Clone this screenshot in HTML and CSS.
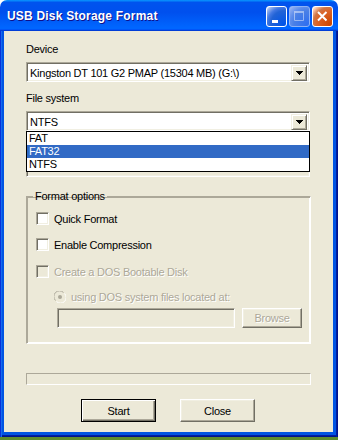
FILE: index.html
```html
<!DOCTYPE html>
<html lang="en">
<head>
  <meta charset="UTF-8">
  <title>USB Disk Storage Format</title>
  <link rel="stylesheet" href="styles.css">
</head>
<body>

  <div class="window">
    <div class="titlebar">
      <span class="title">USB Disk Storage Format</span>
      <div class="caption-btns">
        <span class="cap-btn minimize">
          <svg width="19" height="19"><rect x="5" y="13" width="6" height="3" fill="#fff"/></svg>
        </span>
        <span class="cap-btn maximize">
          <svg width="19" height="19"><path d="M4.5 4.5h9v9h-9z" fill="none" stroke="#fff"/><rect x="4" y="4" width="10" height="2" fill="#fff"/></svg>
        </span>
        <span class="cap-btn close">
          <svg width="19" height="19"><path d="M5 5L13.5 13.5M13.5 5L5 13.5" stroke="#fff" stroke-width="2"/></svg>
        </span>
      </div>
    </div>

    <div class="frame">
      <div class="client">

        <div class="label first">Device</div>
        <div class="combo">
          <span class="combo-text">Kingston DT 101 G2 PMAP (15304 MB) (G:\)</span>
          <span class="combo-btn">
            <svg width="7" height="4" shape-rendering="crispEdges"><rect x="0" y="0" width="7" height="1"/><rect x="1" y="1" width="5" height="1"/><rect x="2" y="2" width="3" height="1"/><rect x="3" y="3" width="1" height="1"/></svg>
          </span>
        </div>

        <div class="label">File system</div>
        <div class="combo-wrap">
          <div class="combo">
            <span class="combo-text">NTFS</span>
            <span class="combo-btn">
              <svg width="7" height="4" shape-rendering="crispEdges"><rect x="0" y="0" width="7" height="1"/><rect x="1" y="1" width="5" height="1"/><rect x="2" y="2" width="3" height="1"/><rect x="3" y="3" width="1" height="1"/></svg>
            </span>
          </div>
          <ul class="droplist">
            <li>FAT</li>
            <li class="selected">FAT32</li>
            <li>NTFS</li>
          </ul>
        </div>

        <!-- volume label row, covered by the open list -->
        <div class="label-space"></div>
        <div class="field"></div>

        <fieldset class="group">
          <legend>Format options</legend>
          <div class="check-row first-row"><span class="checkbox"></span>Quick Format</div>
          <div class="check-row"><span class="checkbox"></span>Enable Compression</div>
          <div class="check-row disabled"><span class="checkbox off"></span>Create a DOS Bootable Disk</div>
          <div class="radio-row disabled">
            <svg width="12" height="12">
              <circle cx="6" cy="6" r="5.5" fill="#ece9d8"/>
              <path d="M1.5 9.5A5.5 5.5 0 0 1 9.5 1.5" fill="none" stroke="#aca899"/>
              <path d="M2.5 10.5A5.5 5.5 0 0 0 10.5 2.5" fill="none" stroke="#fff"/>
              <circle cx="6" cy="6" r="2" fill="#aca899"/>
            </svg>
            <span>using DOS system files located at:</span>
          </div>
          <div class="path-row">
            <div class="path-field"></div>
            <button class="btn browse" disabled>Browse</button>
          </div>
        </fieldset>

        <div class="progress"></div>

        <div class="actions">
          <button class="btn default">Start</button>
          <button class="btn">Close</button>
        </div>

      </div>
    </div>
  </div>
  <div class="desktop"></div>

</body>
</html>
```

FILE: styles.css
```css
body{
  margin: 0;
  background: #fff;
  font-family: "Liberation Sans", Arial, sans-serif;
  font-size: 11px;
  letter-spacing: -0.25px;
  color: #000;
}

.window{
  width: 338px;
}

.titlebar{
  height: 31px;
  box-sizing: border-box;
  padding: 0 5px 0 7px;
  display: flex;
  align-items: center;
  justify-content: space-between;
  border-radius: 7px 7px 0 0;
  background: linear-gradient(180deg, #0997ff, #0053ee 8%, #0050ee 40%, #06f 88%, #06f 93%, #005bff 95%, #003dd7 96%, #003dd7);
}

.title{
  color: #fff;
  font-weight: bold;
  font-size: 12px;
  letter-spacing: 0.2px;
  text-shadow: 1px 1px #0f1089;
  margin-top: 1px;
}

.caption-btns{
  display: flex;
  gap: 2px;
  margin-top: 2px;
}

.cap-btn{
  width: 21px;
  height: 21px;
  box-sizing: border-box;
  border: 1px solid #fff;
  border-radius: 3px;
  display: flex;
}

.minimize{
  background: radial-gradient(circle at 90% 90%, #0054e9 0%, #2263d5 55%, #4479e4 70%, #a3bbec 90%, #fff 100%);
}

.maximize{
  border-color: #8db2f5;
  background: radial-gradient(circle at 90% 90%, #2f6ff0 0%, #4a80e6 55%, #5e8deb 70%, #8aaaf0 90%, #a9c0f3 100%);
}

.maximize svg{
  opacity: 0.45;
}

.close{
  background: radial-gradient(circle at 90% 90%, #cc4600 0%, #dc6527 55%, #cd7546 70%, #ffccb2 90%, #fff 100%);
}

.frame{
  padding: 0 5px 5px 4px;
  background: #0054e3;
  box-shadow: inset 1px 0 #0831d9, inset 2px 0 #166aee, inset -1px 0 #00138c, inset -2px 0 #001ea0, inset 0 -1px #00138c, inset 0 -2px #001ea0;
}

.client{
  height: 401px;
  box-sizing: border-box;
  padding: 12px 0 0 22px;
  background: #ece9d8;
}

.label{
  line-height: 13px;
  margin-top: 10px;
}

.label.first{
  margin-top: 0;
}

.label-space{
  height: 13px;
  margin-top: 7px;
}

/* sunken edit/combo look */
.combo, .field, .path-field{
  box-sizing: border-box;
  border: 1px solid;
  border-color: #aca899 #fff #fff #aca899;
  box-shadow: inset 1px 1px #716f64, inset -1px -1px #f1efe2;
}

.combo{
  margin-top: 6px;
  width: 284px;
  height: 20px;
  padding: 2px;
  background: #fff;
  display: flex;
  justify-content: space-between;
}

.combo-text{
  padding-left: 1px;
  line-height: 16px;
}

.combo-btn{
  width: 16px;
  height: 16px;
  box-sizing: border-box;
  border: 1px solid;
  border-color: #f1efe2 #716f64 #716f64 #f1efe2;
  box-shadow: inset 1px 1px #fff, inset -1px -1px #aca899;
  background: #ece9d8;
  display: flex;
  align-items: center;
  justify-content: center;
}

.combo-wrap{
  position: relative;
}

.droplist{
  position: absolute;
  top: 100%;
  left: 0;
  z-index: 1;
  width: 284px;
  box-sizing: border-box;
  margin: 0;
  padding: 0;
  list-style: none;
  background: #fff;
  border: 1px solid #000;
}

.droplist li{
  height: 13px;
  line-height: 13px;
  padding-left: 2px;
}

.droplist li.selected{
  background: #316ac5;
  color: #fff;
}

.field{
  margin-top: 6px;
  width: 284px;
  height: 20px;
  background: #ece9d8;
}

.group{
  margin: 13px 0 0 0;
  padding: 0 0 15px 9px;
  width: 285px;
  box-sizing: border-box;
  border: 1px solid;
  border-color: #aca899 #fff #fff #aca899;
  box-shadow: 1px 1px #aca899 inset, -1px -1px #fff inset;
}

.group legend{
  margin-left: -3px;
  padding: 0 2px;
  line-height: 13px;
}

.check-row{
  display: flex;
  align-items: center;
  gap: 5px;
  height: 13px;
  margin-top: 13px;
}

.check-row.first-row{
  margin-top: 9px;
}

.check-row.disabled{
  margin-top: 14px;
}

.checkbox{
  width: 13px;
  height: 13px;
  box-sizing: border-box;
  border: 1px solid;
  border-color: #aca899 #fff #fff #aca899;
  box-shadow: inset 1px 1px #716f64, inset -1px -1px #f1efe2;
  background: #fff;
}

.checkbox.off{
  background: #ece9d8;
}

.disabled{
  color: #aca899;
  text-shadow: 1px 1px #fff;
}

.radio-row{
  display: flex;
  align-items: center;
  gap: 5px;
  height: 12px;
  margin: 13px 0 0 18px;
}

.path-row{
  display: flex;
  gap: 7px;
  margin: 5px 0 0 21px;
}

.path-field{
  width: 178px;
  height: 20px;
  background: #ece9d8;
}

.btn{
  width: 75px;
  height: 23px;
  padding: 0;
  font-family: "Liberation Sans", Arial, sans-serif;
  font-size: 11px;
  letter-spacing: -0.25px;
  color: #000;
  background: #ece9d8;
  border: 1px solid;
  border-color: #fff #716f64 #716f64 #fff;
  box-shadow: inset -1px -1px #aca899, inset 1px 1px #f1efe2;
}

.btn.default{
  border: 1px solid #000;
  box-shadow: inset 1px 1px #fff, inset -1px -1px #716f64, inset -2px -2px #aca899;
}

.btn.browse{
  width: 60px;
  height: 20px;
  color: #aca899;
  text-shadow: 1px 1px #fff;
}

.progress{
  margin-top: 29px;
  width: 285px;
  height: 12px;
  box-sizing: border-box;
  border: 1px solid;
  border-color: #aca899 #fff #fff #aca899;
}

.actions{
  width: 284px;
  margin-top: 14px;
  display: flex;
  justify-content: center;
  gap: 24px;
}

.desktop{
  height: 3px;
  background: #5d8c2e;
}
```
